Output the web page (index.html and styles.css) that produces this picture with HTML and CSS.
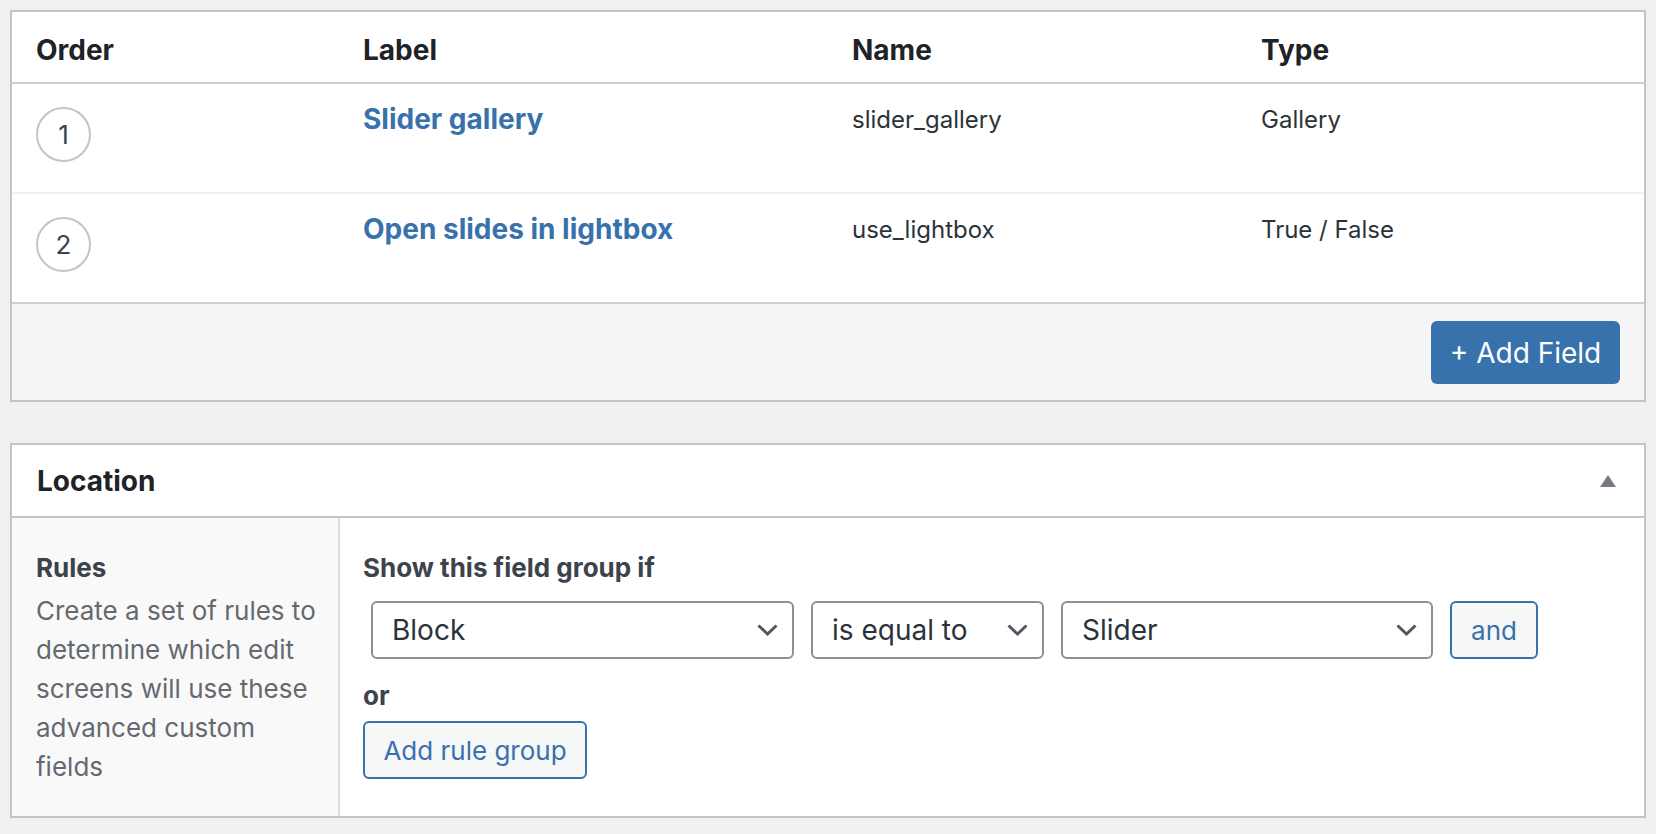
FILE: index.html
```html
<!DOCTYPE html>
<html lang="en">
<head>
<meta charset="utf-8">
<title>Field group</title>
<link rel="stylesheet" href="styles.css">
</head>
<body>
<div class="page">
  <section class="card fields">
    <div class="grid thead">
      <div class="col">Order</div>
      <div class="col">Label</div>
      <div class="col">Name</div>
      <div class="col">Type</div>
    </div>
    <div class="grid row row-first">
      <div class="col"><span class="circle">1</span></div>
      <div class="col"><a class="field-label" href="#">Slider gallery</a></div>
      <div class="col cell">slider_gallery</div>
      <div class="col cell">Gallery</div>
    </div>
    <div class="grid row row-last">
      <div class="col"><span class="circle">2</span></div>
      <div class="col"><a class="field-label" href="#">Open slides in lightbox</a></div>
      <div class="col cell">use_lightbox</div>
      <div class="col cell">True / False</div>
    </div>
    <div class="tfoot">
      <button class="btn-primary" type="button">+ Add Field</button>
    </div>
  </section>

  <section class="card location">
    <div class="card-head">
      <h2 class="card-title">Location</h2>
      <svg class="toggle" width="16" height="12" viewBox="0 0 16 12" aria-hidden="true"><polygon points="8,0 16,12 0,12" fill="#787c82"/></svg>
    </div>
    <div class="card-body">
      <div class="side">
        <div class="side-title">Rules</div>
        <p class="side-desc">Create a set of rules to determine which edit screens will use these advanced custom fields</p>
      </div>
      <div class="main">
        <div class="rule-title">Show this field group if</div>
        <div class="rule-row">
          <div class="select sel-param">Block<svg class="chev" width="21" height="12" viewBox="0 0 21 12"><polyline points="1.5,1.5 10.5,10 19.5,1.5" fill="none" stroke="#50575e" stroke-width="3"/></svg></div>
          <div class="select sel-op">is equal to<svg class="chev" width="21" height="12" viewBox="0 0 21 12"><polyline points="1.5,1.5 10.5,10 19.5,1.5" fill="none" stroke="#50575e" stroke-width="3"/></svg></div>
          <div class="select sel-value">Slider<svg class="chev" width="21" height="12" viewBox="0 0 21 12"><polyline points="1.5,1.5 10.5,10 19.5,1.5" fill="none" stroke="#50575e" stroke-width="3"/></svg></div>
          <button class="btn-secondary btn-and" type="button">and</button>
        </div>
        <div class="or">or</div>
        <button class="btn-secondary btn-group" type="button">Add rule group</button>
      </div>
    </div>
  </section>
</div>
</body>
</html>
```

FILE: styles.css
```css
* { box-sizing: border-box; }

html, body {
  margin: 0;
  padding: 0;
  background: #f0f0f1;
}

body {
  font-family: Inter, "Noto Sans", sans-serif;
  color: #1d2327;
}

.page {
  padding: 10px 10px 0 10px;
}

.card {
  background: #fff;
  border: 2px solid #c3c4c7;
}

.location {
  margin-top: 41px;
}

.grid {
  display: grid;
  grid-template-columns: 327px 489px 409px 1fr;
  padding-left: 24px;
}

.thead {
  height: 72px;
  padding-top: 21px;
  border-bottom: 2px solid #ccd0d4;
  font-size: 28px;
  font-weight: 700;
  line-height: 34px;
  color: #1d2327;
}

.row {
  height: 110px;
  padding-top: 18px;
  border-bottom: 2px solid #f0f0f1;
}

.row-last {
  border-bottom-color: #ccd0d4;
}

.circle {
  display: flex;
  align-items: center;
  justify-content: center;
  width: 55px;
  height: 55px;
  margin-top: 5px;
  border: 2px solid #c3c4c7;
  border-radius: 50%;
  font-size: 26px;
  color: #3c434a;
}

.field-label {
  font-size: 28px;
  line-height: 34px;
  font-weight: 700;
  color: #3872ac;
  text-decoration: none;
}

.cell {
  padding-top: 1px;
  font-size: 24px;
  line-height: 34px;
  color: #2c3338;
}

.tfoot {
  display: flex;
  justify-content: flex-end;
  height: 96px;
  padding: 17px 24px 16px 0;
  background: #f5f5f5;
}

.btn-primary {
  width: 189px;
  height: 63px;
  border: 0;
  border-radius: 6px;
  background: #3872ac;
  color: #fff;
  font-family: inherit;
  font-size: 28px;
}

.card-head {
  display: flex;
  align-items: center;
  justify-content: space-between;
  height: 73px;
  padding: 0 28px 0 25px;
  border-bottom: 2px solid #c3c4c7;
}

.card-title {
  margin: 0;
  font-size: 28px;
  line-height: 34px;
  font-weight: 700;
  color: #1d2327;
}

.toggle {
  display: block;
}

.card-body {
  display: flex;
  height: 298px;
}

.side {
  width: 328px;
  flex: none;
  padding: 30px 0 0 24px;
  background: #f9f9f9;
  border-right: 2px solid #dcdcde;
}

.side-title {
  font-size: 26px;
  line-height: 39px;
  font-weight: 700;
  color: #3c434a;
  margin-bottom: 4px;
}

.side-desc {
  margin: 0;
  width: 283px;
  font-size: 26px;
  line-height: 39px;
  color: #646970;
}

.main {
  flex: 1;
  padding: 30px 0 0 23px;
}

.rule-title {
  font-size: 26px;
  line-height: 39px;
  font-weight: 700;
  color: #3c434a;
}

.rule-row {
  display: flex;
  gap: 17px;
  margin: 14px 0 0 8px;
}

.select {
  display: flex;
  align-items: center;
  justify-content: space-between;
  height: 58px;
  padding: 0 14px 0 19px;
  border: 2px solid #8c8f94;
  border-radius: 6px;
  background: #fff;
  font-size: 28px;
  color: #2c3338;
}

.sel-param { width: 423px; }
.sel-op { width: 233px; }
.sel-value { width: 372px; }

.chev { display: block; }

.btn-secondary {
  height: 58px;
  border: 2px solid #3872ac;
  border-radius: 6px;
  background: #f6f7f7;
  color: #3872ac;
  font-family: inherit;
  font-size: 26px;
  padding: 0;
}

.btn-and { width: 88px; }
.btn-group { width: 224px; }

.or {
  margin-top: 17px;
  font-size: 26px;
  line-height: 39px;
  font-weight: 700;
  color: #3c434a;
}

.main .btn-group {
  margin-top: 6px;
}
```
